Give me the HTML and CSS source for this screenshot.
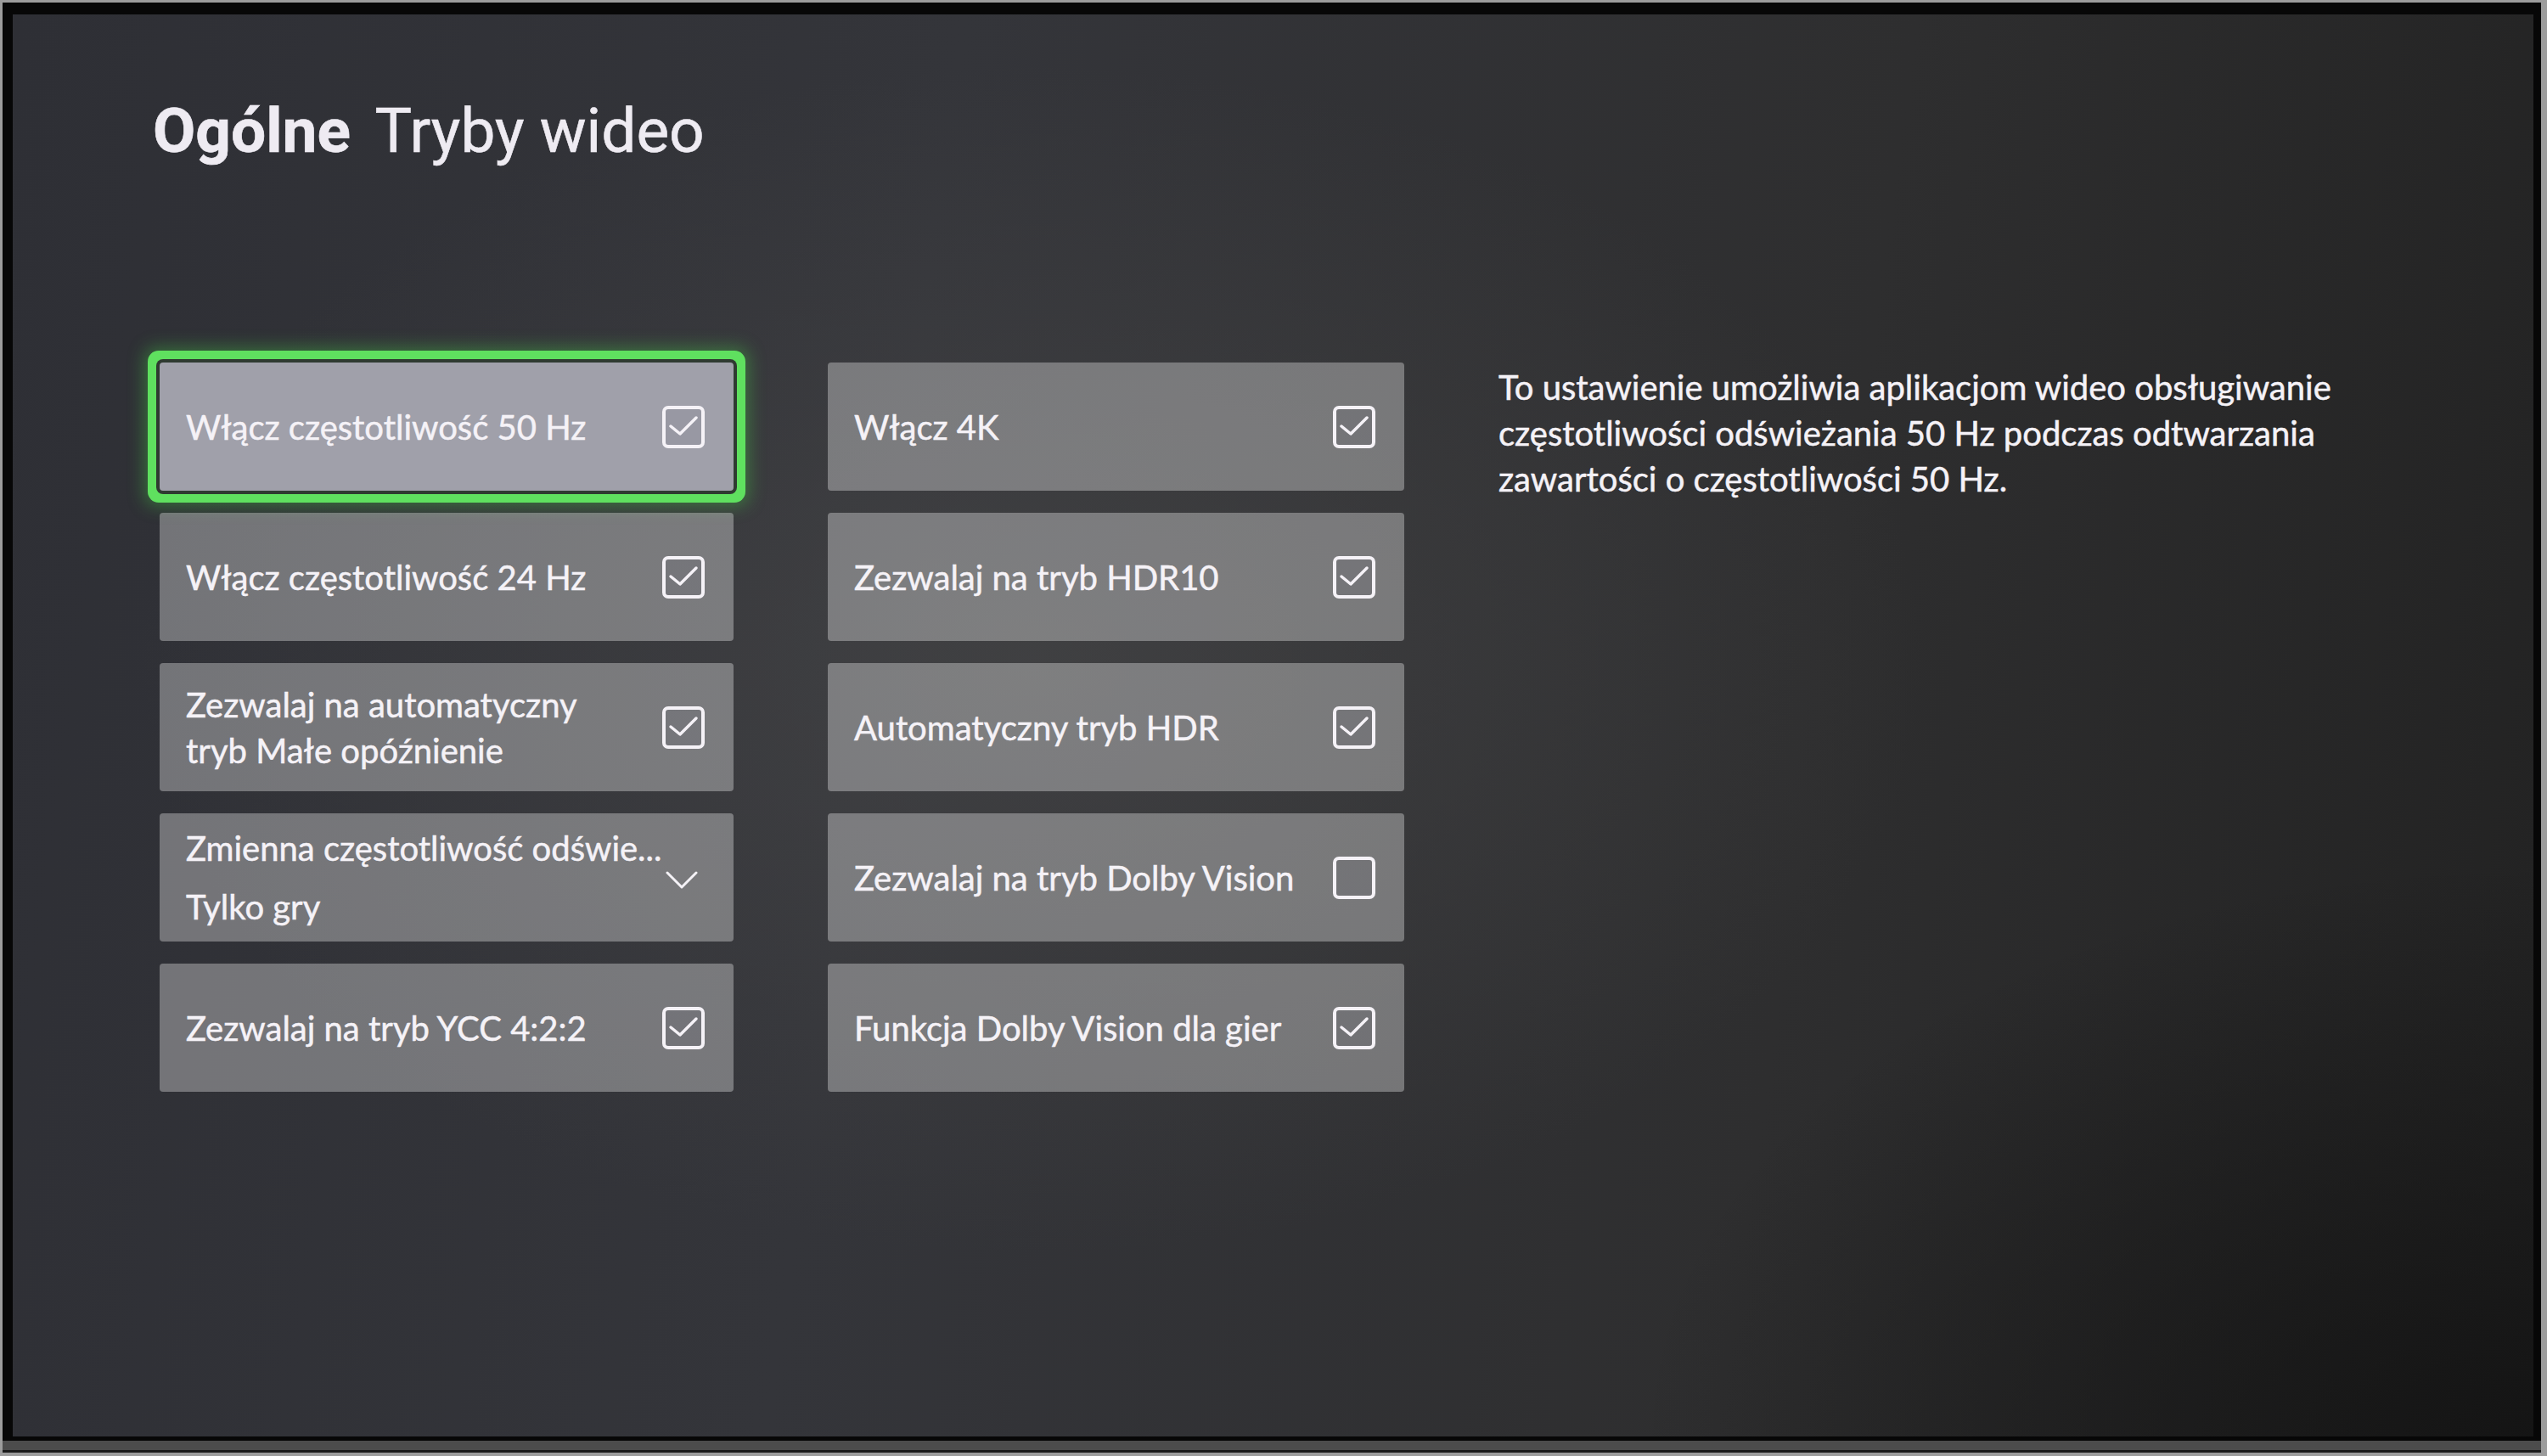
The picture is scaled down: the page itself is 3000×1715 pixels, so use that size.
FILE: index.html
```html
<!DOCTYPE html>
<html lang="pl">
<head>
  <meta charset="UTF-8" />
  <meta name="viewport" content="width=device-width, initial-scale=1.0"/>
  <title>Tryby wideo</title>
  <link rel="stylesheet" href="styles.css">
</head>
<body>
  <div class="bezel">
    <div class="screen">
      <h1 class="title"><b>Ogólne</b> Tryby wideo</h1>

      <div class="content">
        <div class="col">
          <div class="tile focused">
            <span class="label">Włącz częstotliwość 50 Hz</span>
            <svg class="check" viewBox="0 0 50 50"><rect x="2" y="2" width="46" height="46" rx="5"/><polyline points="10,24 21,33 40,14"/></svg>
          </div>
          <div class="tile">
            <span class="label">Włącz częstotliwość 24 Hz</span>
            <svg class="check" viewBox="0 0 50 50"><rect x="2" y="2" width="46" height="46" rx="5"/><polyline points="10,24 21,33 40,14"/></svg>
          </div>
          <div class="tile">
            <span class="label two">Zezwalaj na automatyczny<br>tryb Małe opóźnienie</span>
            <svg class="check" viewBox="0 0 50 50"><rect x="2" y="2" width="46" height="46" rx="5"/><polyline points="10,24 21,33 40,14"/></svg>
          </div>
          <div class="tile">
            <div class="select">
              <span class="label">Zmienna częstotliwość odświe...</span>
              <span class="label value">Tylko gry</span>
            </div>
            <svg class="chevron" viewBox="0 0 38 22"><polyline points="2,2 19,19 36,2"/></svg>
          </div>
          <div class="tile">
            <span class="label">Zezwalaj na tryb YCC 4:2:2</span>
            <svg class="check" viewBox="0 0 50 50"><rect x="2" y="2" width="46" height="46" rx="5"/><polyline points="10,24 21,33 40,14"/></svg>
          </div>
        </div>

        <div class="col">
          <div class="tile">
            <span class="label">Włącz 4K</span>
            <svg class="check" viewBox="0 0 50 50"><rect x="2" y="2" width="46" height="46" rx="5"/><polyline points="10,24 21,33 40,14"/></svg>
          </div>
          <div class="tile">
            <span class="label">Zezwalaj na tryb HDR10</span>
            <svg class="check" viewBox="0 0 50 50"><rect x="2" y="2" width="46" height="46" rx="5"/><polyline points="10,24 21,33 40,14"/></svg>
          </div>
          <div class="tile">
            <span class="label">Automatyczny tryb HDR</span>
            <svg class="check" viewBox="0 0 50 50"><rect x="2" y="2" width="46" height="46" rx="5"/><polyline points="10,24 21,33 40,14"/></svg>
          </div>
          <div class="tile">
            <span class="label">Zezwalaj na tryb Dolby Vision</span>
            <svg class="check" viewBox="0 0 50 50"><rect x="2" y="2" width="46" height="46" rx="5"/></svg>
          </div>
          <div class="tile">
            <span class="label">Funkcja Dolby Vision dla gier</span>
            <svg class="check" viewBox="0 0 50 50"><rect x="2" y="2" width="46" height="46" rx="5"/><polyline points="10,24 21,33 40,14"/></svg>
          </div>
        </div>

        <p class="desc">To ustawienie umożliwia aplikacjom wideo obsługiwanie częstotliwości odświeżania 50 Hz podczas odtwarzania zawartości o częstotliwości 50 Hz.</p>
      </div>
    </div>
  </div>
  <div class="stand"></div>
</body>
</html>
```

FILE: styles.css
```css
body {
  margin: 0;
  height: 1715px;
  overflow: hidden;
  background: #9c9c9c;
  font-family: 'Lato', 'Open Sans', sans-serif;
  color: #f5f2f7;
}

/* tv frame */
.bezel {
  margin: 3px 0 0 3px;
  width: 2969px;
  padding: 14px 9px 5px 12px;
  background: #070707;
}

.stand {
  margin-left: 3px;
  width: 2990px;
  height: 11px;
  background: #4c4c4c;
  border-bottom: 3px solid #1b1b1b;
}

.screen {
  box-sizing: border-box;
  height: 1675px;
  padding: 92px 0 0 173px;
  background:
    radial-gradient(ellipse 1500px 1000px at 1200px 760px, rgba(74, 74, 74, 0.55), rgba(74, 74, 74, 0) 70%),
    radial-gradient(ellipse 1400px 900px at 2969px 1675px, rgba(18, 18, 18, 0.85), rgba(18, 18, 18, 0) 75%),
    linear-gradient(98deg, #2e2f35 0%, #34353a 35%, #2e2e2f 70%, #222222 100%);
}

.title {
  margin: 0 0 0 -8px;
  font-family: 'Roboto', 'Noto Sans', sans-serif;
  font-size: 73px;
  font-weight: 400;
  line-height: 90px;
  color: #eeebf2;
  -webkit-text-stroke: 0.6px #eeebf2;
}

.title b {
  font-weight: 700;
  margin-right: 12px;
}

.content {
  display: grid;
  grid-template-columns: 676px 679px 1120px;
  column-gap: 111px;
  align-items: start;
  margin-top: 228px;
}

.col {
  display: flex;
  flex-direction: column;
  gap: 26px;
}

.tile {
  height: 151px;
  box-sizing: border-box;
  padding: 0 34px 0 31px;
  display: flex;
  align-items: center;
  justify-content: space-between;
  background: rgba(255, 255, 255, 0.33);
  border-radius: 4px;
}

.tile.focused {
  background: #a0a0aa;
  box-shadow:
    0 0 0 4px #2f3a31,
    0 0 0 14px #5fe05f,
    0 0 20px 18px rgba(70, 220, 70, 0.36);
}

.label {
  font-size: 40px;
  line-height: 54px;
  white-space: nowrap;
  -webkit-text-stroke: 0.5px #f5f2f7;
}

.select {
  display: flex;
  flex-direction: column;
  gap: 15px;
}

.chevron {
  width: 38px;
  height: 22px;
  margin: 6px 8px 0 0;
  fill: none;
  stroke: #f5f2f7;
  stroke-width: 3;
  stroke-linecap: round;
  stroke-linejoin: round;
}

.check {
  flex: none;
  width: 50px;
  height: 50px;
  fill: none;
  stroke: #f5f2f7;
}

.check rect {
  stroke-width: 4;
  fill: rgba(60, 60, 90, 0.08);
}

.check polyline {
  stroke-width: 3.5;
  stroke-linecap: round;
  stroke-linejoin: round;
}

.desc {
  margin: 2px 0 0;
  font-size: 40px;
  line-height: 54px;
  -webkit-text-stroke: 0.5px #f5f2f7;
}
```
